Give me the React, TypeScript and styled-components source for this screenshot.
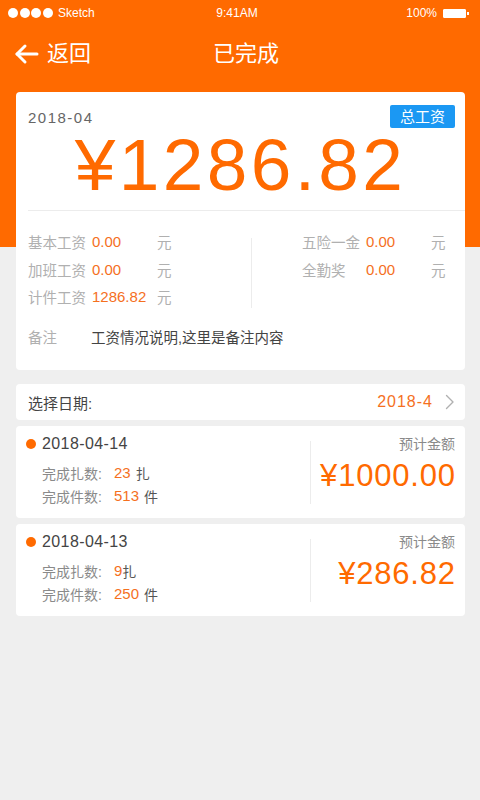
import React from 'react';
import styled, { createGlobalStyle } from 'styled-components';

const GlobalStyle = createGlobalStyle`
  html, body {
    margin: 0;
    padding: 0;
  }
  body {
    font-family: "Liberation Sans", "Noto Sans CJK SC", sans-serif;
    background: #efefef;
  }
`;

const ORANGE = '#ff6a00';
const TEXT_ORANGE = '#f5701e';

const Page = styled.div`
  width: 480px;
  min-height: 800px;
  background: linear-gradient(${ORANGE} 0, ${ORANGE} 247px, #efefef 247px);
`;

const StatusBar = styled.div`
  height: 26px;
  padding: 0 14px 0 8px;
  display: grid;
  grid-template-columns: 1fr auto 1fr;
  align-items: center;
  color: #fff;
  font-size: 12px;
`;

const Signal = styled.div`
  display: flex;
  align-items: center;
  gap: 1.5px;
`;

const Dot = styled.span`
  width: 10px;
  height: 10px;
  border-radius: 50%;
  background: #fff;
`;

const Carrier = styled.span`
  margin-left: 4px;
`;

const Battery = styled.div`
  justify-self: end;
  display: flex;
  align-items: center;
  gap: 6px;
`;

const BatteryBody = styled.span`
  width: 21px;
  height: 7px;
  border: 1px solid #fff;
  border-radius: 1px;
  background: #fff;
  position: relative;
  &::after {
    content: '';
    position: absolute;
    right: -4px;
    top: 2px;
    width: 2px;
    height: 3px;
    background: #fff;
  }
`;

const NavBar = styled.div`
  height: 54px;
  display: grid;
  grid-template-columns: 1fr auto 1fr;
  align-items: center;
  padding: 0 14px;
  color: #fff;
`;

const Back = styled.div`
  display: flex;
  align-items: center;
  gap: 8px;
  font-size: 22px;
  line-height: 1;
  margin-top: 2px;
`;

const Title = styled.div`
  font-size: 22px;
  line-height: 1;
  padding-left: 12px;
  margin-top: 2px;
`;

const Content = styled.div`
  padding: 12px 15px 0 16px;
  display: flex;
  flex-direction: column;
`;

const Card = styled.div`
  background: #fff;
  border-radius: 4px;
`;

const SummaryCard = styled(Card)`
  padding: 13px 0 0 12px;
  height: 278px;
  box-sizing: border-box;
`;

const SummaryTop = styled.div`
  display: flex;
  justify-content: space-between;
  align-items: center;
  padding-right: 10px;
  height: 23px;
`;

const Month = styled.span`
  font-size: 15px;
  color: #666;
  margin-top: 1px;
  letter-spacing: 1.5px;
`;

const Badge = styled.span`
  background: #1b98f3;
  color: #fff;
  font-size: 15px;
  line-height: 23px;
  height: 23px;
  padding: 0 10px;
  border-radius: 2px;
`;

const Total = styled.div`
  text-align: center;
  color: ${ORANGE};
  font-size: 73px;
  letter-spacing: 3.4px;
  line-height: 72px;
  height: 72px;
  padding-right: 12px;
  margin-top: 1px;
`;

const Divider = styled.div`
  height: 1px;
  background: #ececec;
  margin-top: 9px;
`;

const Details = styled.div`
  display: grid;
  grid-template-columns: 223px 1px 1fr;
  margin-top: 17px;
  padding-right: 22px;
`;

const Column = styled.div<{ $right?: boolean }>`
  display: flex;
  flex-direction: column;
  padding-left: ${(p) => (p.$right ? '50px' : '0')};
`;

const VLine = styled.div`
  background: #ececec;
  height: 70px;
  margin-top: 10px;
`;

const Line = styled.div`
  display: grid;
  grid-template-columns: 64px 65px auto;
  align-items: center;
  height: 27.5px;
  font-size: 14.5px;
`;

const Label = styled.span`
  color: #b0b0b0;
`;

const Value = styled.span`
  color: ${TEXT_ORANGE};
  font-size: 15px;
`;

const Unit = styled.span`
  color: #b0b0b0;
`;

const Remark = styled.div`
  display: flex;
  align-items: center;
  margin-top: 15px;
  font-size: 14.5px;
`;

const RemarkLabel = styled.span`
  width: 63px;
  color: #b0b0b0;
`;

const RemarkText = styled.span`
  color: #444;
`;

const SelectRow = styled(Card)`
  margin-top: 14px;
  height: 36px;
  display: flex;
  align-items: center;
  justify-content: space-between;
  padding: 0 10px 0 12px;
  font-size: 15px;
`;

const SelectLabel = styled.span`
  color: #444;
`;

const SelectValue = styled.span`
  display: flex;
  align-items: center;
  gap: 12px;
  color: ${TEXT_ORANGE};
  font-size: 16px;
  letter-spacing: 1px;
`;

const Record = styled(Card)`
  margin-top: 6px;
  height: 92px;
  display: grid;
  grid-template-columns: 1fr 1px 144px;
  padding: 0 10px 0 10px;
`;

const RecordLeft = styled.div`
  padding-top: 9px;
`;

const RecordDate = styled.div`
  display: flex;
  align-items: center;
  gap: 6px;
  font-size: 16px;
  color: #444;
  height: 18px;
  letter-spacing: 0.4px;
`;

const OrangeDot = styled.span`
  width: 10px;
  height: 10px;
  border-radius: 50%;
  background: ${ORANGE};
`;

const Stats = styled.div`
  margin-top: 8px;
  padding-left: 16px;
  font-size: 14px;
`;

const Stat = styled.div`
  height: 23px;
  display: flex;
  align-items: center;
`;

const StatLabel = styled.span`
  color: #8a8a8a;
  width: 72px;
`;

const StatValue = styled.span`
  color: ${TEXT_ORANGE};
  font-size: 15px;
`;

const StatUnit = styled.span<{ $tight?: boolean }>`
  color: #555;
  margin-left: ${(p) => (p.$tight ? '0' : '5px')};
`;

const RecordLine = styled.div`
  background: #ececec;
  height: 63px;
  margin-top: 15px;
`;

const RecordRight = styled.div`
  display: flex;
  flex-direction: column;
  align-items: flex-end;
  padding-top: 9px;
`;

const EstLabel = styled.span`
  font-size: 14px;
  color: #8a8a8a;
  height: 18px;
  line-height: 18px;
`;

const EstAmount = styled.span`
  font-size: 31px;
  color: ${ORANGE};
  line-height: 34px;
  margin-top: 6px;
  letter-spacing: 0.8px;
  margin-right: -0.8px;
`;

const BackArrow = () => (
  <svg width="25" height="22" viewBox="0 0 25 22" fill="none" stroke="#fff" strokeWidth="3" strokeLinecap="round" strokeLinejoin="round">
    <path d="M23 11H3" />
    <path d="M11 3L3 11l8 8" />
  </svg>
);

const Chevron = () => (
  <svg width="10" height="16" viewBox="0 0 10 16" fill="none" stroke="#b0b0b0" strokeWidth="1.4" strokeLinecap="round" strokeLinejoin="round">
    <path d="M1.5 1.5L8 8l-6.5 6.5" />
  </svg>
);

type Rec = { date: string; bundles: string; tightUnit?: boolean; pieces: string; amount: string };

const records: Rec[] = [
  { date: '2018-04-14', bundles: '23', pieces: '513', amount: '¥1000.00' },
  { date: '2018-04-13', bundles: '9', tightUnit: true, pieces: '250', amount: '¥286.82' },
];

const App: React.FC = () => {
  return (
    <Page>
      <GlobalStyle />
      <StatusBar>
        <Signal>
          <Dot />
          <Dot />
          <Dot />
          <Dot />
          <Carrier>Sketch</Carrier>
        </Signal>
        <span>9:41AM</span>
        <Battery>
          <span>100%</span>
          <BatteryBody />
        </Battery>
      </StatusBar>

      <NavBar>
        <Back>
          <BackArrow />
          返回
        </Back>
        <Title>已完成</Title>
        <span />
      </NavBar>

      <Content>
        <SummaryCard>
          <SummaryTop>
            <Month>2018-04</Month>
            <Badge>总工资</Badge>
          </SummaryTop>
          <Total>¥1286.82</Total>
          <Divider />
          <Details>
            <Column>
              <Line>
                <Label>基本工资</Label>
                <Value>0.00</Value>
                <Unit>元</Unit>
              </Line>
              <Line>
                <Label>加班工资</Label>
                <Value>0.00</Value>
                <Unit>元</Unit>
              </Line>
              <Line>
                <Label>计件工资</Label>
                <Value>1286.82</Value>
                <Unit>元</Unit>
              </Line>
            </Column>
            <VLine />
            <Column $right>
              <Line>
                <Label>五险一金</Label>
                <Value>0.00</Value>
                <Unit>元</Unit>
              </Line>
              <Line>
                <Label>全勤奖</Label>
                <Value>0.00</Value>
                <Unit>元</Unit>
              </Line>
            </Column>
          </Details>
          <Remark>
            <RemarkLabel>备注</RemarkLabel>
            <RemarkText>工资情况说明,这里是备注内容</RemarkText>
          </Remark>
        </SummaryCard>

        <SelectRow>
          <SelectLabel>选择日期:</SelectLabel>
          <SelectValue>
            2018-4
            <Chevron />
          </SelectValue>
        </SelectRow>

        {records.map((r) => (
          <Record key={r.date}>
            <RecordLeft>
              <RecordDate>
                <OrangeDot />
                {r.date}
              </RecordDate>
              <Stats>
                <Stat>
                  <StatLabel>完成扎数:</StatLabel>
                  <StatValue>{r.bundles}</StatValue>
                  <StatUnit $tight={r.tightUnit}>扎</StatUnit>
                </Stat>
                <Stat>
                  <StatLabel>完成件数:</StatLabel>
                  <StatValue>{r.pieces}</StatValue>
                  <StatUnit>件</StatUnit>
                </Stat>
              </Stats>
            </RecordLeft>
            <RecordLine />
            <RecordRight>
              <EstLabel>预计金额</EstLabel>
              <EstAmount>{r.amount}</EstAmount>
            </RecordRight>
          </Record>
        ))}
      </Content>
    </Page>
  );
};

export default App;
